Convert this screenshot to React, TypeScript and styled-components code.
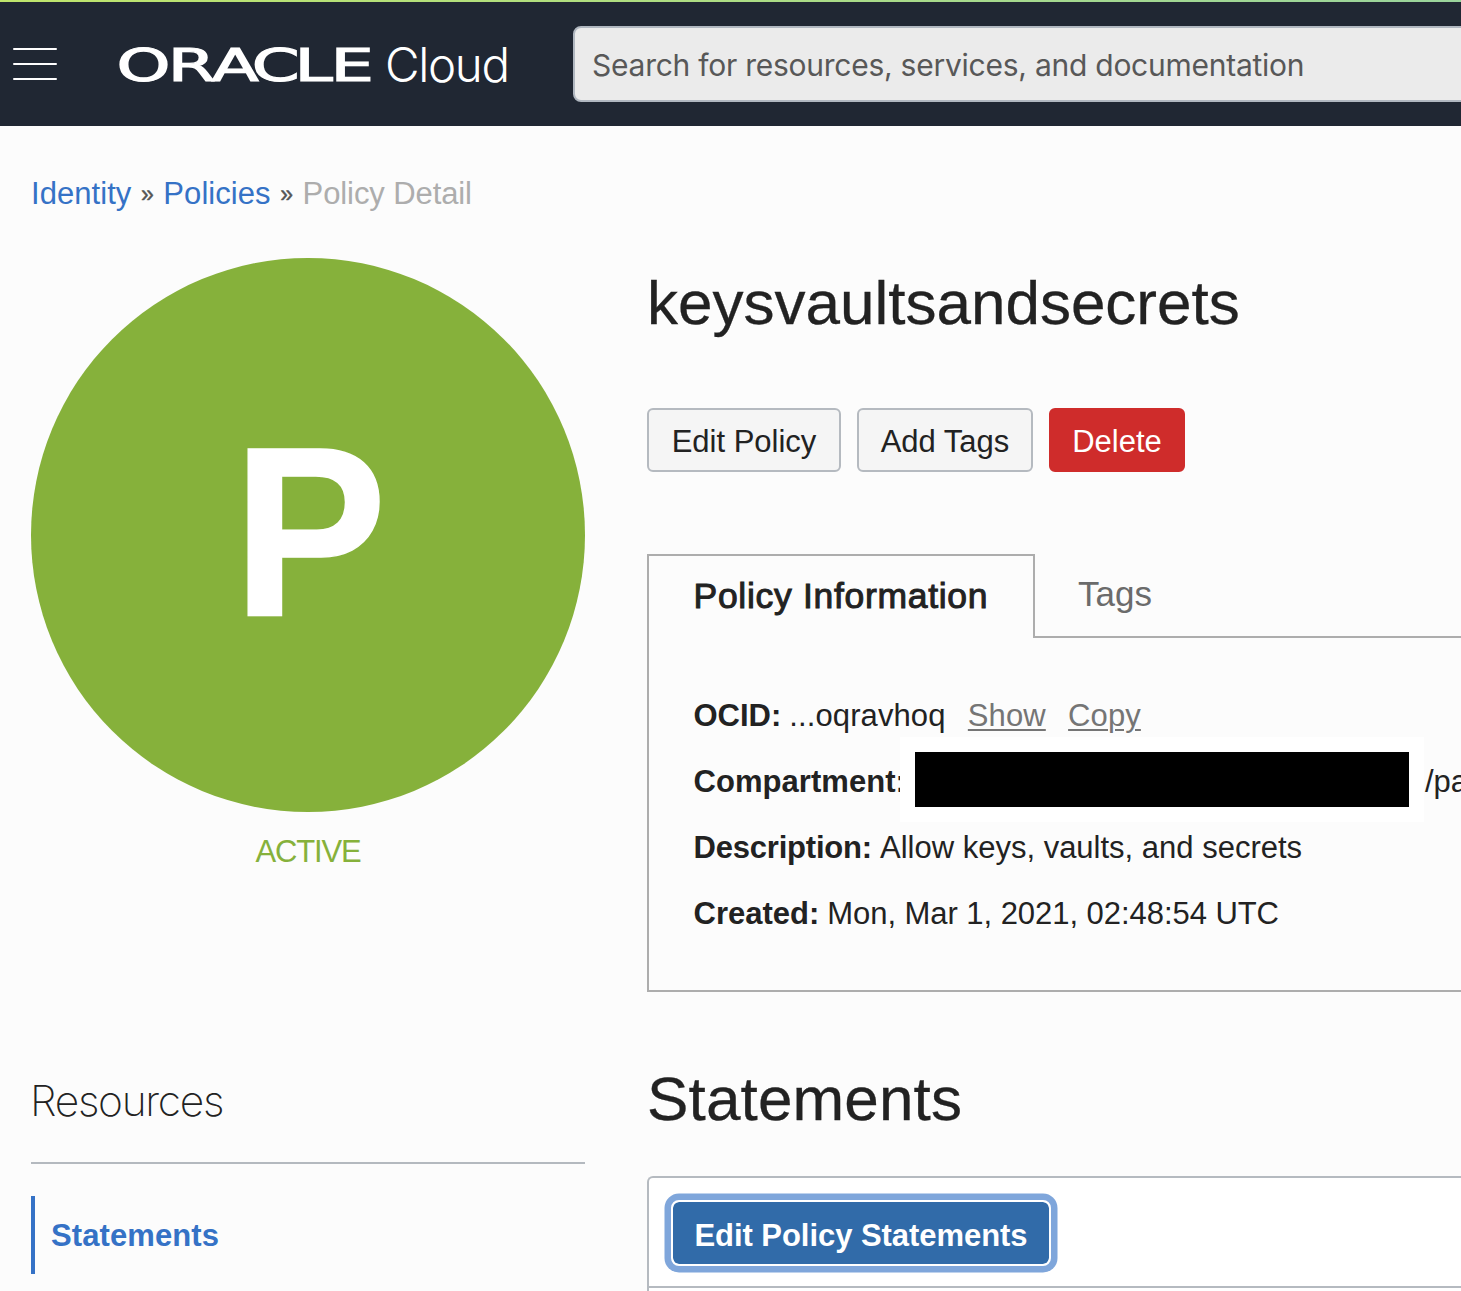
import React from 'react';
import styled, { createGlobalStyle } from 'styled-components';

const sans = '"Liberation Sans", Arial, sans-serif';

const GlobalStyle = createGlobalStyle`
  *, *::before, *::after { box-sizing: border-box; }
  html, body { margin: 0; padding: 0; }
  body {
    background: #fcfcfc;
    color: #222;
    font-family: ${sans};
    font-size: 31px;
    overflow: hidden;
  }
`;

const Page = styled.div`
  width: 1461px;
  height: 1291px;
  overflow: hidden;
  display: flex;
  flex-direction: column;
`;

const Accent = styled.div`
  height: 2px;
  flex: none;
  background: linear-gradient(90deg, #bfe56c, #9ad49c);
`;

const Header = styled.header`
  height: 124px;
  flex: none;
  display: flex;
  align-items: center;
  background: #202733;
  padding-left: 13px;
`;

const MenuButton = styled.button`
  width: 44px;
  height: 32px;
  padding: 0;
  border: 0;
  background: none;
  display: flex;
  flex-direction: column;
  justify-content: space-between;
`;

const MenuLine = styled.span`
  width: 44px;
  height: 2px;
  border-radius: 1px;
  background: #fff;
`;

const Brand = styled.svg`
  display: block;
  width: 400px;
  height: 60px;
  margin-left: 58px;
  flex: none;
`;

const Search = styled.div`
  margin-left: 58px;
  width: 960px;
  flex: none;
  height: 76px;
  border: 2px solid #b0b7c0;
  border-radius: 8px;
  background: #ebebeb;
  color: #585858;
  padding: 1px 0 0 17px;
  line-height: 72px;
  font-family: Inter, sans-serif;
  font-size: 30px;
  letter-spacing: -0.25px;
  white-space: nowrap;
`;

const Breadcrumb = styled.nav`
  display: flex;
  padding: 48px 0 0 31px;
  height: 132px;
  flex: none;
  line-height: 39px;
  white-space: nowrap;
`;

const Crumb = styled.a<{ $current?: boolean }>`
  color: ${(p) => (p.$current ? '#adadad' : '#3572c6')};
  letter-spacing: ${(p) => (p.$current ? -0.1 : 0.05)}px;
`;

const Separator = styled.span`
  width: 32px;
  font-size: 23px;
  line-height: 41px;
  text-align: center;
  color: #555;
  -webkit-text-stroke: 0.4px #555;
`;

const Body = styled.main`
  display: grid;
  grid-template-columns: 554px 1fr;
  column-gap: 62px;
  padding-left: 31px;
`;

const Side = styled.aside`
  display: flex;
  flex-direction: column;
`;

const Avatar = styled.div`
  display: flex;
  justify-content: center;
  width: 554px;
  height: 554px;
  border-radius: 50%;
  background: #86b13b;
  color: #fff;
  font-size: 242px;
  font-weight: 700;
  line-height: 549px;
  padding-left: 3px;
`;

const Initial = styled.span`
  transform: scaleX(0.955);
  -webkit-text-stroke: 1.4px #fff;
`;

const Status = styled.div`
  margin-top: 20px;
  line-height: 40px;
  text-align: center;
  letter-spacing: -1.2px;
  color: #86b13b;
`;

const ResourcesTitle = styled.h2`
  margin: 200px 0 0;
  height: 92px;
  border-bottom: 2px solid #b4b9bf;
  font-family: Inter, sans-serif;
  font-size: 42.5px;
  font-weight: 200;
  line-height: 58px;
  letter-spacing: -1.3px;
  text-indent: -1px;
`;

const ResourceLink = styled.a`
  margin-top: 32px;
  height: 78px;
  border-left: 4px solid #3572c6;
  padding: 1px 0 0 16px;
  line-height: 77px;
  font-weight: 700;
  letter-spacing: 0.1px;
  color: #3572c6;
`;

const Content = styled.section`
  display: flex;
  flex-direction: column;
  min-width: 0;
`;

const Title = styled.h1<{ $top: number; $spacing?: number }>`
  margin: ${(p) => p.$top}px 0 0;
  font-size: 62px;
  font-weight: 400;
  line-height: 74px;
  letter-spacing: ${(p) => p.$spacing ?? 0}px;
  -webkit-text-stroke: 0.3px #222;
`;

const Actions = styled.div`
  display: flex;
  gap: 16px;
  margin-top: 68px;
`;

const Button = styled.button<{ $width: number; $danger?: boolean }>`
  width: ${(p) => p.$width}px;
  height: 64px;
  padding: 4px 0 0;
  border: 2px solid ${(p) => (p.$danger ? '#cf2c2b' : '#b5bac0')};
  border-radius: 6px;
  background: ${(p) => (p.$danger ? '#cf2c2b' : '#f5f5f5')};
  color: ${(p) => (p.$danger ? '#fff' : '#222')};
  font: 31px/56px ${sans};
  white-space: nowrap;
`;

const TabBar = styled.div`
  display: flex;
  height: 84px;
  margin-top: 82px;
  font-size: 35px;
`;

const ActiveTab = styled.div`
  width: 388px;
  border: 2px solid #adadad;
  border-bottom: 0;
  padding-left: 44.5px;
  line-height: 80px;
  font-size: 35.5px;
  letter-spacing: 0.7px;
  -webkit-text-stroke: 1px #222;
  white-space: nowrap;
`;

const Tab = styled.div`
  flex: 1;
  border-bottom: 2px solid #adadad;
  padding-left: 43px;
  line-height: 80px;
  color: #6b6b6b;
`;

const InfoPanel = styled.div`
  height: 354px;
  border-left: 2px solid #adadad;
  border-bottom: 2px solid #adadad;
  padding: 45px 0 0 44.5px;
`;

const InfoRow = styled.div`
  display: flex;
  align-items: center;
  height: 66px;
  line-height: 66px;
  white-space: nowrap;
`;

const Label = styled.span<{ $spacing?: number }>`
  font-weight: 700;
  margin-right: 8px;
  letter-spacing: ${(p) => p.$spacing ?? 0}px;
`;

const Value = styled.span<{ $spacing?: number }>`
  letter-spacing: ${(p) => p.$spacing ?? 0}px;
`;

const InfoLink = styled.a`
  margin-left: 22.3px;
  color: #757575;
  letter-spacing: 0.1px;
  text-decoration: underline;
  text-decoration-thickness: 2px;
  text-underline-offset: 3px;
`;

const Redaction = styled.span`
  flex: none;
  width: 524px;
  height: 85px;
  margin: -12px 1px -7px -14px;
  border: 15px solid #fff;
  background: #000;
`;

const StatementsBox = styled.div`
  margin-top: 40px;
  height: 140px;
  border: 2px solid #b5bac0;
  border-right: 0;
  border-radius: 6px 0 0 0;
  background: #fff;
`;

const Toolbar = styled.div`
  height: 110px;
  border-bottom: 2px solid #b5bac0;
  padding: 22px 0 0 22px;
`;

const PrimaryButton = styled.button`
  display: block;
  width: 380px;
  height: 66px;
  padding: 5px 0 0;
  border: 2px solid #fff;
  border-radius: 8px;
  box-shadow: 0 0 0 6.5px #7fa6db;
  background: #316ba9;
  background-clip: padding-box;
  color: #fff;
  font: 700 31px/57px ${sans};
  letter-spacing: -0.05px;
  white-space: nowrap;
`;

function OracleCloudLogo() {
  return (
    <Brand viewBox="0 0 400 60" role="img" aria-label="ORACLE Cloud">
      <g transform="translate(0 46.6) scale(1.56 1)">
        <text
          x="1 33.8 62 87.7 115 138.2"
          y="0"
          fontFamily="DejaVu Sans, sans-serif"
          fontSize="44"
          fill="#fff"
          stroke="#fff"
          strokeWidth="1.2"
        >
          ORACLE
        </text>
      </g>
      <text
        x="270"
        y="47.6"
        fontFamily="Inter, sans-serif"
        fontSize="47.5"
        fontWeight="300"
        fill="#fff"
        textLength="125"
        lengthAdjust="spacing"
      >
        Cloud
      </text>
    </Brand>
  );
}

export default function App() {
  return (
    <Page>
      <GlobalStyle />
      <Accent />
      <Header>
        <MenuButton aria-label="Menu">
          <MenuLine />
          <MenuLine />
          <MenuLine />
        </MenuButton>
        <OracleCloudLogo />
        <Search>Search for resources, services, and documentation</Search>
      </Header>
      <Breadcrumb>
        <Crumb>Identity</Crumb>
        <Separator>»</Separator>
        <Crumb>Policies</Crumb>
        <Separator>»</Separator>
        <Crumb $current>Policy Detail</Crumb>
      </Breadcrumb>
      <Body>
        <Side>
          <Avatar>
            <Initial>P</Initial>
          </Avatar>
          <Status>ACTIVE</Status>
          <ResourcesTitle>Resources</ResourcesTitle>
          <ResourceLink>Statements</ResourceLink>
        </Side>
        <Content>
          <Title $top={8}>keysvaultsandsecrets</Title>
          <Actions>
            <Button $width={194}>Edit Policy</Button>
            <Button $width={176}>Add Tags</Button>
            <Button $width={136} $danger>Delete</Button>
          </Actions>
          <TabBar>
            <ActiveTab>Policy Information</ActiveTab>
            <Tab>Tags</Tab>
          </TabBar>
          <InfoPanel>
            <InfoRow>
              <Label>OCID:</Label>
              <Value $spacing={0.1}>...oqravhoq</Value>
              <InfoLink>Show</InfoLink>
              <InfoLink>Copy</InfoLink>
            </InfoRow>
            <InfoRow>
              <Label $spacing={0.05}>Compartment:</Label>
              <Redaction />
              <Value>/pa</Value>
            </InfoRow>
            <InfoRow>
              <Label $spacing={-0.2}>Description:</Label>
              <Value>Allow keys, vaults, and secrets</Value>
            </InfoRow>
            <InfoRow>
              <Label>Created:</Label>
              <Value $spacing={-0.05}>Mon, Mar 1, 2021, 02:48:54 UTC</Value>
            </InfoRow>
          </InfoPanel>
          <Title $top={70} $spacing={0.15}>Statements</Title>
          <StatementsBox>
            <Toolbar>
              <PrimaryButton>Edit Policy Statements</PrimaryButton>
            </Toolbar>
          </StatementsBox>
        </Content>
      </Body>
    </Page>
  );
}
